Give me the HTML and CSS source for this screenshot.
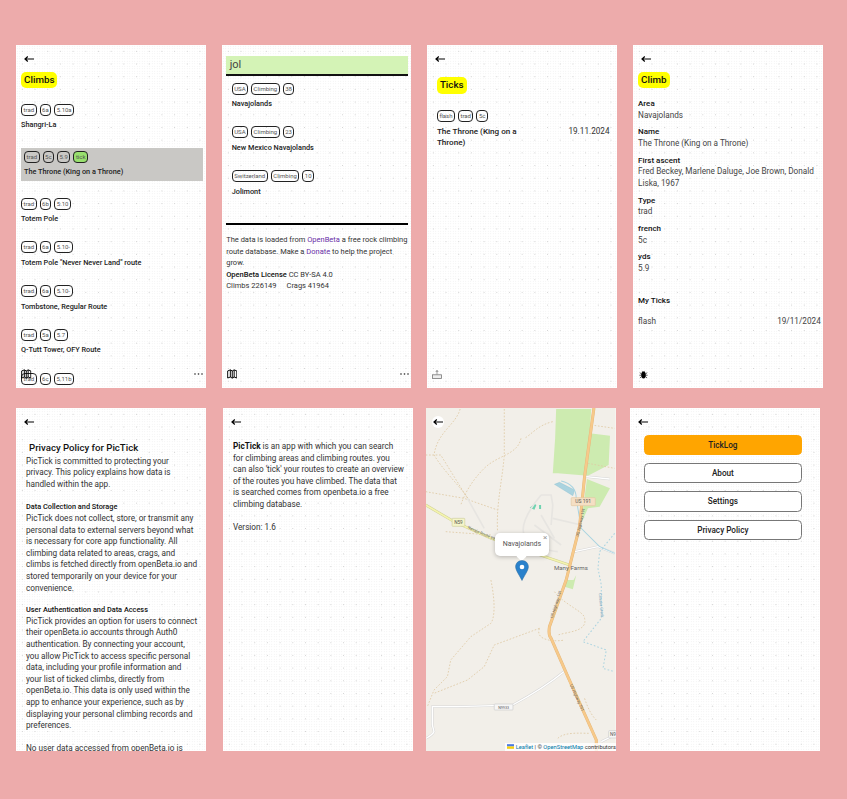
FILE: index.html
```html
<!DOCTYPE html>
<html lang="en">
<head>
<meta charset="utf-8">
<title>PicTick</title>
<link rel="stylesheet" href="styles.css">
</head>
<body>
<svg class="defs" width="0" height="0" aria-hidden="true">
  <symbol id="arrow" viewBox="0 0 10 8"><path d="M10 4H1M3.800 1.500 1 4l2.800 2.500" fill="none" stroke="#000" stroke-width="1.200"/></symbol>
  <symbol id="book" viewBox="0 0 11 10"><path d="M.7 1.800 3.500.7 5.500 1.800 7.500.7l2.800 1.100v7.400L7.500 8.200 5.500 9.300 3.500 8.200.7 9.200zM3.500.7v7.500M5.500 1.800v7.500M7.500.7v7.500" fill="none" stroke="#000" stroke-width="1"/></symbol>
  <symbol id="more" viewBox="0 0 9 2"><circle cx="1" cy="1" r=".8"/><circle cx="4.500" cy="1" r=".8"/><circle cx="8" cy="1" r=".8"/></symbol>
</svg>
<main class="gallery">
  <div class="row row-top">
    <section class="screen">
      <svg class="back"><use href="#arrow"/></svg>
      <h1 class="pill pill-climbs">Climbs</h1>
      <ul class="list list-climbs">
        <li class="item"><div class="chips"><span class="chip">trad</span><span class="chip">6a</span><span class="chip">5.10a</span></div><div class="name">Shangri-La</div></li>
        <li class="item selected"><div class="chips"><span class="chip">trad</span><span class="chip">5c</span><span class="chip">5.9</span><span class="chip chip-tick">tick</span></div><div class="name">The Throne (King on a Throne)</div></li>
        <li class="item"><div class="chips"><span class="chip">trad</span><span class="chip">6b</span><span class="chip">5.10</span></div><div class="name">Totem Pole</div></li>
        <li class="item"><div class="chips"><span class="chip">trad</span><span class="chip">6a</span><span class="chip">5.10-</span></div><div class="name">Totem Pole "Never Never Land" route</div></li>
        <li class="item"><div class="chips"><span class="chip">trad</span><span class="chip">6a</span><span class="chip">5.10-</span></div><div class="name">Tombstone, Regular Route</div></li>
        <li class="item"><div class="chips"><span class="chip">trad</span><span class="chip">5a</span><span class="chip">5.7</span></div><div class="name">Q-Tutt Tower, OFY Route</div></li>
        <li class="item"><div class="chips"><span class="chip">trad</span><span class="chip">6c</span><span class="chip">5.11b</span></div></li>
      </ul>
      <svg class="foot-left foot-book"><use href="#book"/></svg>
      <svg class="foot-more"><use href="#more"/></svg>
    </section>

    <section class="screen">
      <div class="search">jol</div>
      <ul class="list list-areas">
        <li class="item"><div class="chips"><span class="chip">USA</span><span class="chip">Climbing</span><span class="chip">38</span></div><div class="name">Navajolands</div></li>
        <li class="item"><div class="chips"><span class="chip">USA</span><span class="chip">Climbing</span><span class="chip">23</span></div><div class="name">New Mexico Navajolands</div></li>
        <li class="item"><div class="chips"><span class="chip">Switzerland</span><span class="chip">Climbing</span><span class="chip">10</span></div><div class="name">Jolimont</div></li>
      </ul>
      <div class="rule"></div>
      <div class="credits">
        <p>The data is loaded from <a>OpenBeta</a> a free rock climbing route database. Make a <a>Donate</a> to help the project grow.</p>
        <p><b>OpenBeta License</b> CC BY-SA 4.0</p>
        <p class="stats"><span>Climbs 226149</span><span>Crags 41964</span></p>
      </div>
      <svg class="foot-left foot-book"><use href="#book"/></svg>
      <svg class="foot-more"><use href="#more"/></svg>
    </section>

    <section class="screen">
      <svg class="back back-inset"><use href="#arrow"/></svg>
      <h1 class="pill pill-ticks">Ticks</h1>
      <div class="tick-row">
        <div class="tick-main">
          <div class="chips"><span class="chip">flash</span><span class="chip">trad</span><span class="chip">5c</span></div>
          <div class="tick-name">The Throne (King on a Throne)</div>
        </div>
        <div class="tick-date">19.11.2024</div>
      </div>
      <svg class="foot-left foot-upload" viewBox="0 0 10 9"><path d="M5 0v4.500M3.800 2 5 .6 6.200 2" fill="none" stroke="#777" stroke-width=".7"/><rect x=".5" y="4.800" width="9" height="3.600" fill="#eee" stroke="#777" stroke-width=".8"/></svg>
    </section>

    <section class="screen">
      <svg class="back back-inset"><use href="#arrow"/></svg>
      <h1 class="pill pill-climb">Climb</h1>
      <dl class="details">
        <dt>Area</dt><dd>Navajolands</dd>
        <dt>Name</dt><dd>The Throne (King on a Throne)</dd>
        <dt>First ascent</dt><dd>Fred Beckey, Marlene Daluge, Joe Brown, Donald Liska, 1967</dd>
        <dt>Type</dt><dd>trad</dd>
        <dt>french</dt><dd>5c</dd>
        <dt>yds</dt><dd>5.9</dd>
      </dl>
      <h2 class="my-ticks">My Ticks</h2>
      <div class="my-tick"><span>flash</span><span>19/11/2024</span></div>
      <svg class="foot-left foot-bug" viewBox="0 0 10 10"><path d="M5 1.600c1.700 0 2.600 1.700 2.600 4S6.600 9.400 5 9.400 2.400 7.900 2.400 5.600 3.300 1.600 5 1.600z"/><path d="M.8 3l2 1.300M9.200 3l-2 1.300M.4 5.800h2M9.600 5.800h-2M1 8.800l1.800-1.300M9 8.800 7.200 7.500M3.600 1 4.400 2M6.400 1 5.600 2" stroke="#000" stroke-width=".7" fill="none"/></svg>
    </section>
  </div>

  <div class="row row-bottom">
    <section class="screen">
      <svg class="back"><use href="#arrow"/></svg>
      <div class="policy">
        <h1>Privacy Policy for PicTick</h1>
        <p>PicTick is committed to protecting your privacy. This policy explains how data is handled within the app.</p>
        <h3>Data Collection and Storage</h3>
        <p>PicTick does not collect, store, or transmit any personal data to external servers beyond what is necessary for core app functionality. All climbing data related to areas, crags, and climbs is fetched directly from openBeta.io and stored temporarily on your device for your convenience.</p>
        <h3>User Authentication and Data Access</h3>
        <p>PicTick provides an option for users to connect their openBeta.io accounts through Auth0 authentication. By connecting your account, you allow PicTick to access specific personal data, including your profile information and your list of ticked climbs, directly from openBeta.io. This data is only used within the app to enhance your experience, such as by displaying your personal climbing records and preferences.</p>
        <p class="policy-gap">No user data accessed from openBeta.io is stored by PicTick beyond your device.</p>
      </div>
    </section>

    <section class="screen screen-about">
      <svg class="back"><use href="#arrow"/></svg>
      <div class="about">
        <p><b>PicTick</b> is an app with which you can search for climbing areas and climbing routes. you can also 'tick' your routes to create an overview of the routes you have climbed. The data that is searched comes from openbeta.io a free climbing database.</p>
        <p class="version">Version: 1.6</p>
      </div>
    </section>

    <section class="screen screen-map">
      <svg class="map" viewBox="6 9 567 1029" preserveAspectRatio="none">
        <rect x="6" y="9" width="567" height="1029" fill="#f2efe9"/>
        <path class="m-green" d="M395 12H500L495 85 556 92 552 180 490 212 400 205 385 205 392 100z"/>
        <path class="m-green" d="M487 222 556 250 525 305 490 310 470 355 478 290z"/>
        <path class="m-green" d="M422 525H447L455 510 445 553 420 545z"/>
        <path class="m-water" d="M390 238 405 232 450 255 445 272z"/>
        <path class="m-green2" d="M316 308 330 296 336 300 330 314zM344 300h6v12h-6z"/>
        <g class="m-minor">
          <path d="M108 12C95 60 40 80 30 150 60 200 105 240 135 285M240 12V150C235 220 215 300 220 380M5 150H50L130 280M290 100C280 150 220 150 180 190S120 270 110 300M5 260 120 280 220 315M385 50C340 60 320 90 300 100M500 60 570 70M490 175 570 190M65 380 200 390M345 670 210 720 180 785 130 825 30 865M200 525C215 600 210 640 200 655L140 695 80 765 70 815 30 855 10 905M345 670C330 710 400 710 420 705M390 560C420 600 480 620 480 640 490 680 430 680 400 690M400 1000C420 980 470 985 495 985M480 880C490 910 500 930 515 945"/>
        </g>
        <g class="m-track">
          <path d="M130 280 180 370M350 270C300 330 290 370 300 390 320 420 380 440 400 440M350 270H380L385 300 380 360M385 340 470 360"/>
          <path d="M350 330 390 400M330 360 410 420"/>
        </g>
        <path class="m-white-o" d="M485 215 555 222M418 800C370 840 320 870 265 900L100 905H25V960L30 980C25 990 15 995 6 1000M570 990 530 1010M450 440 520 425 570 445"/>
        <path class="m-white" d="M485 215 555 222M418 800C370 840 320 870 265 900L100 905H25V960L30 980C25 990 15 995 6 1000M570 990 530 1010M450 440 520 425 570 445"/>
        <path class="m-stream" d="M410 228C440 235 455 250 455 280L470 370 525 425 570 445"/>
        <path class="m-stream m-dash" d="M570 385 525 440 520 490 530 540 530 640 475 710 545 735 535 790 570 800"/>
        <path class="m-yellow-o" d="M5 300 90 350 200 400 435 480"/>
        <path class="m-yellow" d="M5 300 90 350 200 400 435 480"/>
        <path class="m-road-o" d="M508 9 480 215 465 365 425 525 375 665C372 685 375 695 380 700L430 815 515 1005V1038"/>
        <path class="m-road" d="M508 9 480 215 465 365 425 525 375 665C372 685 375 695 380 700L430 815 515 1005V1038"/>
        <rect class="m-shield" x="440" y="278" width="72" height="24" rx="2"/>
        <text class="m-text" x="476" y="295" text-anchor="middle">US 191</text>
        <rect class="m-shield-y" x="84" y="340" width="38" height="24" rx="2"/>
        <text class="m-text m-small" x="103" y="357" text-anchor="middle">N59</text>
        <rect class="m-shield-w" x="210" y="897" width="56" height="18" rx="2"/>
        <text class="m-text m-tiny" x="238" y="911" text-anchor="middle">N9933</text>
        <rect class="m-shield-w" x="552" y="977" width="30" height="22" rx="2"/>
        <text class="m-text m-small" x="556" y="994">N9</text>
        <text class="m-label" x="439" y="496" text-anchor="middle">Many Farms</text>
        <text class="m-along" transform="translate(130 370) rotate(24)">Navajo Route 59</text>
        <text class="m-along" transform="translate(462 395) rotate(-77)">US Highway 191</text>
        <text class="m-along" transform="translate(385 640) rotate(-72)">US Highway 191</text>
        <text class="m-along" transform="translate(436 840) rotate(66)">US Highway 191</text>
        <text class="m-creek" transform="translate(522 565) rotate(84)">Chuska Creek</text>
      </svg>
      <div class="map-back"><svg class="map-back-icon"><use href="#arrow"/></svg></div>
      <div class="popup">Navajolands<span class="popup-close">&times;</span></div>
      <div class="popup-tip"></div>
      <svg class="marker" viewBox="0 0 14 21"><path d="M7 .5C3.200.5.600 3.300.600 6.900c0 3.300 4.500 9.500 6.400 13.600 1.900-4.100 6.400-10.300 6.400-13.600C13.400 3.300 10.800.5 7 .5z" fill="#2a81cb" stroke="#2e6c9e" stroke-width=".5"/><circle cx="7" cy="7" r="2.300" fill="#fff"/></svg>
      <div class="attribution"><svg class="flag" viewBox="0 0 12 8"><rect width="12" height="4" fill="#4C7BE1"/><rect y="4" width="12" height="3" fill="#FFD500"/><rect y="7" width="12" height="1" fill="#E0BC00"/></svg> <a>Leaflet</a> | &copy; <a>OpenStreetMap</a> contributors</div>
    </section>

    <section class="screen screen-menu">
      <svg class="back"><use href="#arrow"/></svg>
      <nav class="menu">
        <button class="btn btn-primary">TickLog</button>
        <button class="btn">About</button>
        <button class="btn">Settings</button>
        <button class="btn">Privacy Policy</button>
      </nav>
    </section>
  </div>
</main>
</body>
</html>
```

FILE: styles.css
```css
* { box-sizing: border-box; }
html, body { margin: 0; padding: 0; }
body {
  width: 847px;
  height: 799px;
  overflow: hidden;
  background: #edabab;
  font-family: Roboto, "Liberation Sans", sans-serif;
  color: #222;
}
.defs { position: absolute; }
.gallery { padding: 45px 0 0 16px; display: flex; flex-direction: column; gap: 20px; }
.row { display: flex; }
.row-top { gap: 16px; }
.screen {
  position: relative;
  flex: none;
  width: 189.7px;
  height: 343px;
  overflow: hidden;
  background-color: #fff;
  background-image:
    radial-gradient(circle, #d2d2d2 .7px, transparent .9px),
    radial-gradient(circle, #ececec .55px, transparent .75px);
  background-size: 12.7px 12.7px, 2.5px 2.5px;
  font-size: 8.2px;
  line-height: 11.6px;
}
.screen-about { margin-left: 17.3px; }
.screen-map { margin-left: 13.5px; }
.screen-menu { margin-left: 14.5px; }

.back { display: block; width: 10px; height: 8px; margin: 10px 0 0 8px; }
.back-inset { margin-left: 7.5px; }

.pill {
  display: table;
  margin: 0;
  padding: 0 3px;
  height: 16.6px;
  border-radius: 5px;
  background: #ff0;
  color: #111;
  font-size: 9.8px;
  font-weight: 500;
  line-height: 16.6px;
}
.pill-climbs { margin: 8.7px 0 0 5px; }
.pill-ticks { margin: 14px 0 0 9.5px; }
.pill-climb { margin: 8.7px 0 0 5px; }

.list { list-style: none; margin: 0; padding: 0; }
.list-climbs { margin: 15.7px 0 0 5px; width: 182px; }
.list-areas { margin: 6.7px 0 0 10px; }
.item { min-height: 27.4px; margin-bottom: 16.3px; }
.selected { padding: 3px; background: #c9c8c5; }
.chips { display: flex; gap: 3px; }
.chip {
  display: block;
  height: 12px;
  padding: 0 1.5px;
  border: 1px solid #222;
  border-radius: 4px;
  font-size: 6px;
  line-height: 10px;
  color: #555;
}
.chip-tick { background: #98e06e; }
.name { margin-top: 3.5px; font-size: 7.3px; line-height: 12px; font-weight: 500; color: #222; white-space: nowrap; }

.search {
  margin: 11px 3px 0 4.5px;
  height: 20px;
  padding-left: 3.5px;
  background: #d4f3b6;
  border-bottom: 2px solid #111;
  font-size: 11px;
  line-height: 18px;
  color: #444;
}
.rule { height: 2px; margin: 25px 3px 0 4.5px; background: #000; }
.credits { margin: 9.2px 3px 0 4.5px; font-size: 7.5px; line-height: 11.6px; color: #333; }
.credits p { margin: 0; }
.credits a { color: #6a2fa8; }
.credits b { font-weight: 500; color: #111; }
.stats { display: flex; gap: 10px; }

.foot-left { position: absolute; left: 5px; bottom: 9px; }
.foot-book { width: 10.5px; height: 10px; }
.foot-upload { width: 10px; height: 9px; }
.foot-bug { width: 9px; height: 9px; left: 6px; }
.foot-more { position: absolute; right: 2.5px; bottom: 13px; width: 9px; height: 2px; fill: #222; }

.tick-row { display: flex; justify-content: space-between; margin: 16px 7.5px 0 9.5px; }
.tick-main { width: 104px; }
.tick-name { margin-top: 4px; font-size: 8.1px; line-height: 11px; font-weight: 500; color: #222; }
.tick-date { margin-top: 16px; font-size: 8.2px; line-height: 11px; color: #333; }

.details { margin: 9.7px 0 0 5px; width: 181px; }
.details dt { font-weight: 500; font-size: 8px; color: #111; }
.details dd { margin: 0 0 5.2px; color: #444; }
.my-ticks { margin: 20px 0 0 5px; font-size: 8px; line-height: 11.6px; font-weight: 500; color: #111; }
.my-tick { display: flex; justify-content: space-between; margin: 9.5px 2px 0 5px; color: #444; }

.policy { margin: 13.7px 0 0 10px; width: 172px; color: #333; }
.policy h1 { margin: 0 0 0 3px; font-size: 9.65px; line-height: 16px; font-weight: 500; color: #111; }
.policy h3 { margin: 11px 0 0; font-size: 7.35px; line-height: 11.6px; font-weight: 500; color: #111; }
.policy h3 + p + h3 { margin-top: 10px; }
.policy p { margin: 0; }
.policy .policy-gap { margin-top: 11.6px; }

.about { margin: 15px 0 0 10px; width: 171.9px; color: #333; }
.about p { margin: 0; }
.about b { font-weight: 700; color: #111; }
.about .version { margin-top: 11.6px; }

.map { display: block; width: 100%; height: 100%; }
.m-green { fill: #cdebb0; }
.m-green2 { fill: #6fd3b0; }
.m-water { fill: #aad3df; stroke: #7fb8cc; stroke-width: 1; }
.m-minor path { fill: none; stroke: #dfc9a4; stroke-width: 2.5; stroke-dasharray: 5 5; }
.m-track path { fill: none; stroke: #e7e5e1; stroke-width: 5; }
.m-white-o { fill: none; stroke: #d6d6d6; stroke-width: 7; }
.m-white { fill: none; stroke: #fff; stroke-width: 4; }
.m-stream { fill: none; stroke: #a9d3e0; stroke-width: 3; }
.m-dash { stroke-dasharray: 5 6; }
.m-yellow-o { fill: none; stroke: #cfcf96; stroke-width: 8; }
.m-yellow { fill: none; stroke: #f4f4ae; stroke-width: 5; }
.m-road-o { fill: none; stroke: #e2b577; stroke-width: 9; }
.m-road { fill: none; stroke: #f7c98a; stroke-width: 7; }
.m-shield { fill: #f5dfc4; stroke: #e3c7a2; stroke-width: 2; }
.m-shield-y { fill: #f5f5c8; stroke: #cfcf9e; stroke-width: 2; }
.m-shield-w { fill: #f6f6f6; stroke: #ccc; stroke-width: 2; }
.m-text { font-size: 15px; fill: #555; }
.m-small { font-size: 14px; }
.m-tiny { font-size: 11px; }
.m-label { font-size: 18.5px; fill: #666; }
.m-along { font-size: 12px; fill: #666; }
.m-creek { font-size: 12px; fill: #7aa8c0; }

.map-back {
  position: absolute;
  left: 5.5px;
  top: 7.5px;
  width: 12px;
  height: 12px;
  border-radius: 50%;
  background: #fff;
}
.map-back-icon { display: block; width: 10px; height: 8px; margin: 2px 0 0 1px; }
.popup {
  position: absolute;
  left: 68.5px;
  top: 125px;
  width: 54.5px;
  height: 22.5px;
  border-radius: 5px;
  background: #fff;
  box-shadow: 0 1px 4px rgba(0,0,0,.25);
  font-size: 7px;
  line-height: 22px;
  text-align: center;
  color: #555;
}
.popup-close { position: absolute; right: 2px; top: -6px; font-size: 8px; color: #999; }
.popup-tip {
  position: absolute;
  left: 92px;
  top: 147px;
  width: 7px;
  height: 7px;
  background: #fff;
  transform: rotate(45deg) translate(-1.5px, -1.5px);
}
.marker { position: absolute; left: 89px; top: 152px; width: 14px; height: 21px; }
.attribution {
  position: absolute;
  right: 0;
  bottom: 0;
  height: 8px;
  padding-left: 2px;
  background: rgba(255,255,255,.8);
  font-size: 5.75px;
  line-height: 8px;
  color: #333;
  white-space: nowrap;
}
.attribution a { color: #0078a8; }
.flag { width: 7px; height: 5px; }

.menu { display: flex; flex-direction: column; gap: 8px; margin: 9px 0 0 13.5px; width: 158px; }
.btn {
  height: 20.2px;
  padding: 0;
  border: 1px solid #777;
  border-radius: 4.5px;
  background: #fff;
  font-family: inherit;
  font-size: 8.2px;
  font-weight: 500;
  color: #222;
}
.btn-primary { background: #ffa500; border-color: #ffa500; }
```
